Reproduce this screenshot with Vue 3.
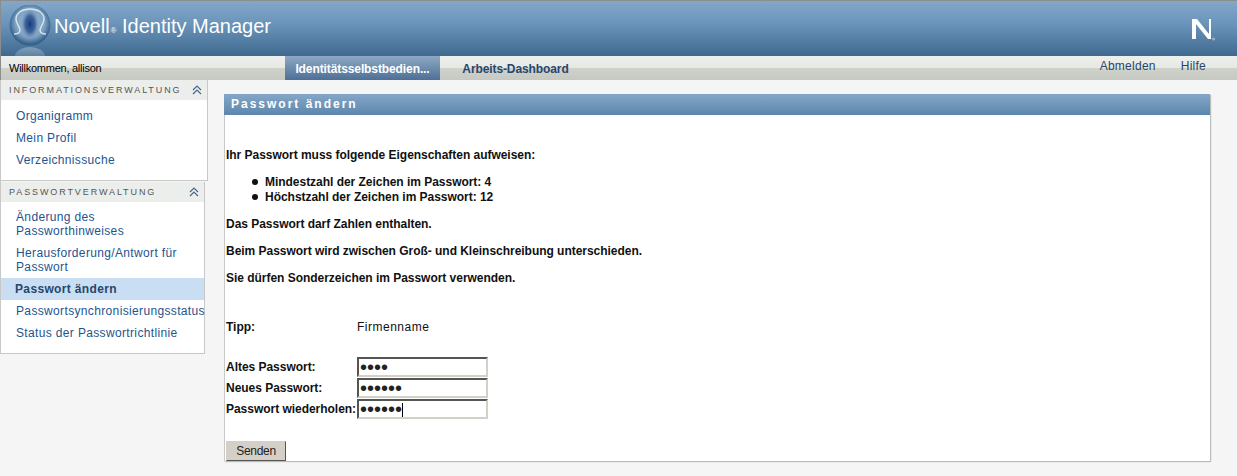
<template>
  <div class="page">
    <header class="banner">
      <svg class="globe" width="44" height="51" viewBox="0 0 44 51">
        <defs>
          <radialGradient id="orb" cx="50%" cy="45%" r="55%">
            <stop offset="0" stop-color="#9db9d2" />
            <stop offset="0.65" stop-color="#7fa2c2" />
            <stop offset="0.9" stop-color="#3f6a95" />
            <stop offset="1" stop-color="#2d5580" />
          </radialGradient>
          <radialGradient id="head" cx="50%" cy="50%" r="50%">
            <stop offset="0" stop-color="#17397c" />
            <stop offset="0.55" stop-color="#2b5291" stop-opacity="0.8" />
            <stop offset="1" stop-color="#6d92b8" stop-opacity="0" />
          </radialGradient>
          <linearGradient id="mirror" x1="0" y1="0" x2="0" y2="1">
            <stop offset="0" stop-color="#a9c0d5" stop-opacity="0.55" />
            <stop offset="1" stop-color="#a9c0d5" stop-opacity="0" />
          </linearGradient>
        </defs>
        <ellipse cx="22" cy="51" rx="15" ry="9" fill="url(#mirror)" />
        <circle cx="22" cy="20" r="20.5" fill="url(#orb)" />
        <ellipse cx="22" cy="19" rx="9" ry="15" fill="url(#head)" />
        <path d="M6 29c3 0 6-1 6-4 0-3-4-6-4-11C8 8 14 4 22 4s14 4 14 10c0 5-4 8-4 11 0 3 3 4 6 4" fill="none" stroke="#e6eef5" stroke-width="1.5" stroke-opacity="0.85" />
      </svg>
      <div class="product">Novell<span class="reg">®</span> Identity Manager</div>
      <svg class="nlogo" width="26" height="26" viewBox="0 0 26 26">
        <path d="M2 3h5l12 15V3h2v20h-3L6 8v15H2z" fill="#fff" />
        <circle cx="23.5" cy="23" r="1" fill="none" stroke="#dfe8f0" stroke-width="0.6" />
      </svg>
    </header>

    <nav class="tabs">
      <div class="welcome">Willkommen, allison</div>
      <div class="tab active">Identitätsselbstbedien...</div>
      <div class="tab">Arbeits-Dashboard</div>
      <div class="links">
        <a>Abmelden</a>
        <a>Hilfe</a>
      </div>
    </nav>

    <div class="body">
      <aside class="side">
        <section v-for="group in groups" :key="group.title" class="group" :class="group.cls">
          <div class="group-head">
            <span>{{ group.title }}</span>
            <svg width="10" height="10" viewBox="0 0 10 10">
              <path d="M1 5l4-4 4 4M1 9l4-4 4 4" fill="none" stroke="#44688c" stroke-width="1.2" />
            </svg>
          </div>
          <ul>
            <li v-for="item in group.items" :key="item" :class="{ current: item === 'Passwort ändern' }">{{ item }}</li>
          </ul>
        </section>
      </aside>

      <main class="panel">
        <h1>Passwort ändern</h1>
        <div class="content">
          <p class="first">Ihr Passwort muss folgende Eigenschaften aufweisen:</p>
          <ul class="rules">
            <li>Mindestzahl der Zeichen im Passwort: 4</li>
            <li>Höchstzahl der Zeichen im Passwort: 12</li>
          </ul>
          <p>Das Passwort darf Zahlen enthalten.</p>
          <p>Beim Passwort wird zwischen Groß- und Kleinschreibung unterschieden.</p>
          <p>Sie dürfen Sonderzeichen im Passwort verwenden.</p>
          <div class="tip">
            <b>Tipp:</b>
            <span>Firmenname</span>
          </div>
          <div class="form">
            <template v-for="field in fields" :key="field.label">
              <label>{{ field.label }}</label>
              <div class="field" :class="{ focused: field.focused }">{{ field.dots }}</div>
            </template>
          </div>
          <button class="send">Senden</button>
        </div>
      </main>
    </div>
  </div>
</template>

<script setup>
const groups = [
  {
    title: 'INFORMATIONSVERWALTUNG',
    cls: 'info',
    items: ['Organigramm', 'Mein Profil', 'Verzeichnissuche'],
  },
  {
    title: 'PASSWORTVERWALTUNG',
    cls: 'pass',
    items: [
      'Änderung des Passworthinweises',
      'Herausforderung/Antwort für Passwort',
      'Passwort ändern',
      'Passwortsynchronisierungsstatus',
      'Status der Passwortrichtlinie',
    ],
  },
]

const fields = [
  { label: 'Altes Passwort:', dots: '••••' },
  { label: 'Neues Passwort:', dots: '••••••' },
  { label: 'Passwort wiederholen:', dots: '••••••', focused: true },
]
</script>

<style>
html, body { margin: 0; }
</style>

<style scoped>
.page {
  width: 1237px;
  height: 476px;
  overflow: hidden;
  background: #f5f5f5;
  font-family: "Liberation Sans", Arial, sans-serif;
  font-size: 12px;
  display: flex;
  flex-direction: column;
  border-top: 1px solid #8c8c8c;
  box-sizing: border-box;
}
.banner {
  height: 55px;
  flex: none;
  display: flex;
  align-items: flex-start;
  background: linear-gradient(#84a7c8, #6b95bb 40%, #40698f);
  border-left: 1px solid #8c8c8c;
  color: #fff;
}
.globe { margin: 4px 2px 0 7px; flex: none; }
.product {
  font-size: 20px;
  margin: 13px 0 0 0;
  line-height: 24px;
}
.reg { font-size: 8px; margin-left: 1px; }
.nlogo { margin: 15px 21px 0 auto; }
.tabs {
  height: 24px;
  flex: none;
  display: flex;
  background: linear-gradient(#eef0ed, #e6e8e4 50%, #cfd1cb 52%, #c6c8c2);
  border-left: 1px solid #8c8c8c;
}
.welcome {
  width: 284px;
  padding-left: 8px;
  box-sizing: border-box;
  line-height: 24px;
  font-size: 11px;
  letter-spacing: -0.25px;
  color: #000;
}
.tab {
  width: 155px;
  text-align: center;
  line-height: 26px;
  font-weight: bold;
  color: #26466d;
  letter-spacing: -0.1px;
}
.tab + .tab { width: 151px; }
.tab.active {
  color: #fff;
  background: linear-gradient(#8ea9c4, #4e6f96);
}
.links {
  margin-left: auto;
  display: flex;
  gap: 25px;
  padding-right: 31px;
  color: #26466d;
  letter-spacing: 0.25px;
  line-height: 21px;
}
.body {
  flex: 1;
  display: flex;
  align-items: flex-start;
}
.side {
  width: 208px;
  flex: none;
  border-left: 1px solid #c8c8c8;
  box-sizing: border-box;
}
.group {
  background: #fff;
  border-right: 1px solid #c8c8c8;
  border-bottom: 1px solid #c8c8c8;
  box-sizing: border-box;
}
.group.pass { width: 204px; margin-top: 1px; }
.group-head {
  height: 20px;
  background: #eceeeb;
  display: flex;
  align-items: center;
  justify-content: space-between;
  padding: 0 5px 0 8px;
  font-size: 9px;
  letter-spacing: 1.9px;
  color: #555;
}
.group ul {
  list-style: none;
  margin: 0;
  padding: 5px 0 9px;
}
.group.pass ul { padding-top: 4px; }
.group li {
  padding: 4px 0 4px 15px;
  line-height: 14px;
  color: #1d5590;
  letter-spacing: 0.35px;
  font-size: 12px;
}
.group li.current {
  background: #c9def2;
  color: #26466d;
  font-weight: bold;
  padding-left: 14px;
}
.panel {
  width: 986px;
  margin: 14px 0 0 16px;
  background: #fff;
  flex: none;
  box-shadow: 1px 1px 1px #bbb;
}
h1 {
  margin: 0;
  height: 21px;
  padding-left: 7px;
  background: linear-gradient(#84a7c8, #5d86ad);
  color: #fff;
  font-size: 12px;
  font-weight: bold;
  letter-spacing: 2px;
  line-height: 21px;
}
.content {
  border-left: 1px solid #c8c8c8;
  padding-left: 1px;
  color: #111;
  font-weight: bold;
  height: 346px;
  letter-spacing: -0.03px;
}
p { margin: 0 0 13px; line-height: 14px; }
p.first { padding-top: 33px; margin-bottom: 13px; }
.rules { margin: 0 0 12px; padding: 0 0 0 39px; list-style: none; }
.rules li { line-height: 15px; }
.rules li::before {
  content: '';
  display: inline-block;
  width: 6px;
  height: 6px;
  border-radius: 50%;
  background: #111;
  margin: 0 7px 2px -13px;
  vertical-align: middle;
}
.tip {
  margin-top: 35px;
  display: flex;
  line-height: 14px;
}
.tip b { width: 131px; }
.tip span { font-weight: normal; letter-spacing: 0.5px; }
.form {
  margin-top: 23px;
  display: grid;
  grid-template-columns: 131px 131px;
  row-gap: 1px;
  align-items: center;
}
.form label { white-space: nowrap; }
.field {
  height: 20px;
  box-sizing: border-box;
  border: 2px solid;
  border-color: #555 #d4d0c8 #d4d0c8 #555;
  background: #fff;
  font-weight: normal;
  font-size: 20px;
  line-height: 16px;
  padding-left: 1px;
  letter-spacing: 0;
  color: #222;
  overflow: hidden;
}
.field.focused::after {
  content: '';
  display: inline-block;
  width: 1px;
  height: 15px;
  background: #000;
  vertical-align: -2px;
}
.send {
  display: block;
  margin-top: 22px;
  width: 60px;
  height: 20px;
  padding: 0;
  border: 1px solid;
  border-color: #d4d0c8 #555 #555 #d4d0c8;
  background: #d4d0c8;
  font: 12px "Liberation Sans", Arial, sans-serif;
  letter-spacing: -0.3px;
  color: #222;
}
</style>
